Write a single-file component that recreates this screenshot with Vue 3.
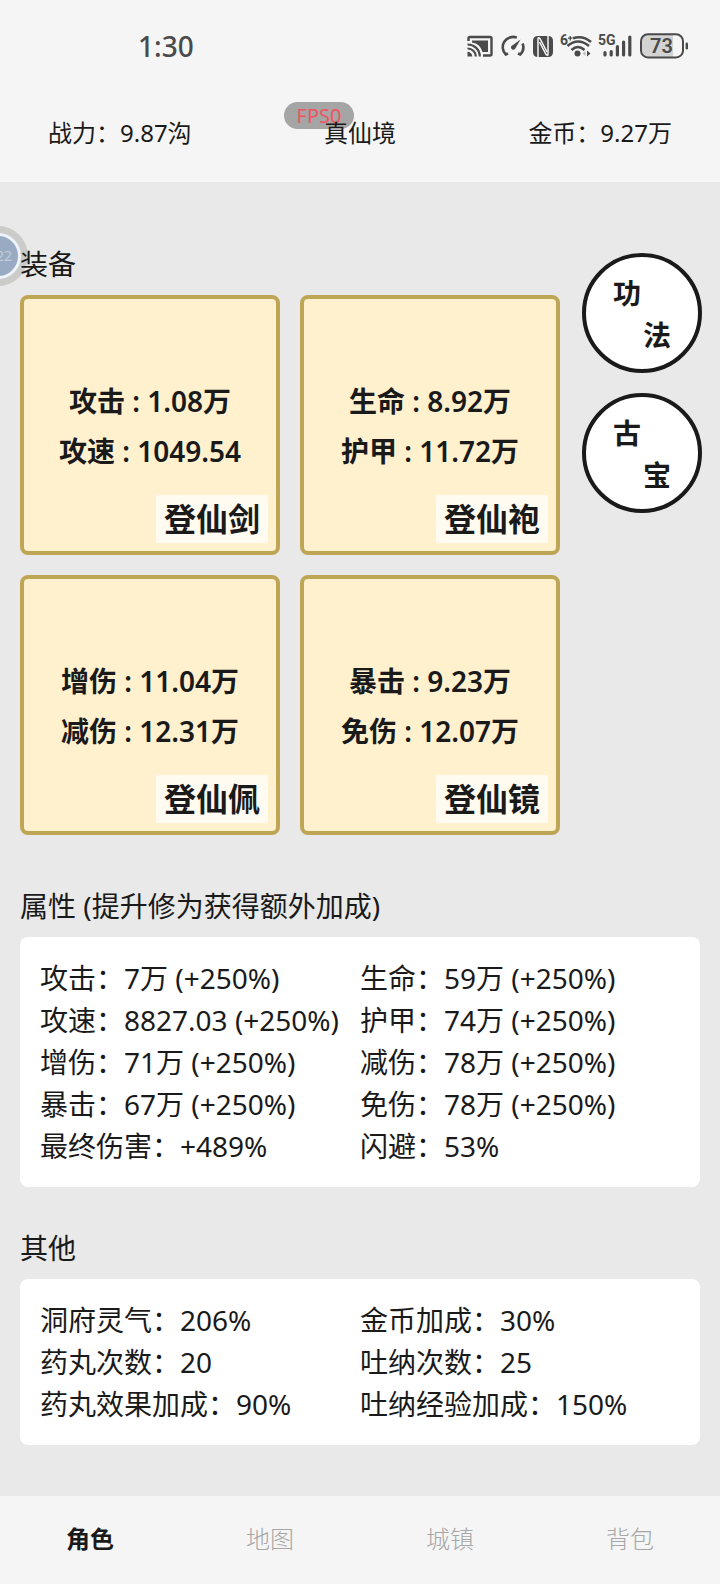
<script setup>
import { ref } from 'vue'

const equipment = [
  { name: '登仙剑', stats: ['攻击 : 1.08万', '攻速 : 1049.54'] },
  { name: '登仙袍', stats: ['生命 : 8.92万', '护甲 : 11.72万'] },
  { name: '登仙佩', stats: ['增伤 : 11.04万', '减伤 : 12.31万'] },
  { name: '登仙镜', stats: ['暴击 : 9.23万', '免伤 : 12.07万'] },
]

const shortcuts = [['功', '法'], ['古', '宝']]

const panels = [
  {
    title: '属性 (提升修为获得额外加成)',
    rows: [
      '攻击：7万 (+250%)', '生命：59万 (+250%)',
      '攻速：8827.03 (+250%)', '护甲：74万 (+250%)',
      '增伤：71万 (+250%)', '减伤：78万 (+250%)',
      '暴击：67万 (+250%)', '免伤：78万 (+250%)',
      '最终伤害：+489%', '闪避：53%',
    ],
  },
  {
    title: '其他',
    rows: [
      '洞府灵气：206%', '金币加成：30%',
      '药丸次数：20', '吐纳次数：25',
      '药丸效果加成：90%', '吐纳经验加成：150%',
    ],
  },
]

const tabs = ['角色', '地图', '城镇', '背包']
const activeTab = ref('角色')
</script>

<template>
  <div class="app">
    <div class="status">
      <span class="clock">1:30</span>
      <div class="status-icons">
        <svg width="26" height="26" viewBox="0 0 26 26" fill="none" stroke="#4a4a4a">
          <path d="M1.5 8V5.5Q1.5 4 3 4H23Q24.5 4 24.5 5.5V21Q24.5 22.5 23 22.5H16" stroke-width="2.4" />
          <path d="M5 7.5H21V19H15.5A13 13 0 0 0 5 9.5Z" fill="#4a4a4a" stroke="none" />
          <path d="M0.5 11.5A12 12 0 0 1 12.8 23.5M0.5 15.5A8 8 0 0 1 8.8 23.5" stroke-width="2.2" />
          <path d="M0.5 18.8A4.8 4.8 0 0 1 5.3 23.5H0.5Z" fill="#4a4a4a" stroke="none" />
        </svg>
        <svg width="24" height="26" viewBox="0 0 24 26" fill="none" stroke="#4a4a4a" stroke-width="2.6">
          <path d="M7 20.5L4.8 21.5A10.3 10.3 0 0 1 15.8 4.6M21.6 10.5A10.3 10.3 0 0 1 19.2 21.5L17 20.5" />
          <path d="M19.5 6.5L14 16A2.4 2.4 0 0 1 10.2 13.2Z" fill="#4a4a4a" stroke="none" />
        </svg>
        <svg width="20" height="26" viewBox="0 0 20 26">
          <path d="M5 3H15Q20 3 20 8V19Q20 24 15 24H5Q0 24 0 19V8Q0 3 5 3Z" fill="#4a4a4a" />
          <path d="M5 24V6Q5 3.6 7 5.6L14 19" fill="none" stroke="#f5f5f5" stroke-width="1.5" />
          <path d="M15 3V21Q15 23.4 13 21.4L6.5 9" fill="none" stroke="#f5f5f5" stroke-width="1.5" />
        </svg>
        <svg width="30" height="26" viewBox="0 0 30 26" fill="none" stroke="#4a4a4a" stroke-width="2.5">
          <text x="-1" y="12" class="tiny">6</text>
          <path d="M7 5.2H11.5M9.25 3V7.5" stroke-width="1.3" />
          <path d="M12 5.2Q22 2 30 9M6.5 13Q17 4 28 13M10.5 17Q17 11 23.5 17" />
          <circle cx="16.5" cy="20.5" r="3" fill="#4a4a4a" stroke="none" />
          <path d="M24.5 18V23L21.5 20.5Z" fill="#bdbdbd" stroke="none" />
          <path d="M26 17.5V23.5L29.5 20.5Z" fill="#4a4a4a" stroke="none" />
        </svg>
        <svg width="33" height="26" viewBox="0 0 33 26" fill="none" stroke="#4a4a4a" stroke-width="3.2" stroke-linecap="round">
          <text x="-1" y="12" class="tiny">5G</text>
          <path d="M6 19.5V22M12.2 18.5V22M18.4 13.5V22M24.6 9V22M30.8 4V22" />
        </svg>
        <svg width="48" height="26" viewBox="0 0 48 26">
          <path d="M9 2H33V24H9Q2 24 2 17V9Q2 2 9 2Z" fill="#d3d3d3" />
          <rect x="1" y="1.2" width="42" height="23.2" rx="7" fill="none" stroke="#4a4a4a" stroke-width="2" />
          <rect x="45.6" y="9.5" width="2.4" height="7" rx="1.2" fill="#4a4a4a" />
          <text x="21.5" y="20" text-anchor="middle" class="charge">73</text>
        </svg>
      </div>
    </div>

    <header class="summary">
      <span>战力：9.87沟</span>
      <span class="realm"><span class="fps">FPS0</span><span class="realm-name">真仙境</span></span>
      <span>金币：9.27万</span>
    </header>

    <main class="content">
      <div class="ball"><span class="ball-core">22</span></div>
      <section class="gear">
        <div class="gear-main">
          <h2>装备</h2>
          <div class="cards">
            <button v-for="item in equipment" :key="item.name" type="button" class="card">
              <span v-for="stat in item.stats" :key="stat" class="stat">{{ stat }}</span>
              <span class="badge">{{ item.name }}</span>
            </button>
          </div>
        </div>
        <div class="shortcuts">
          <button v-for="chars in shortcuts" :key="chars[0]" type="button" class="round">
            <span class="pair"><span>{{ chars[0] }}</span><span class="second">{{ chars[1] }}</span></span>
          </button>
        </div>
      </section>

      <section v-for="panel in panels" :key="panel.title" class="block">
        <h2>{{ panel.title }}</h2>
        <div class="panel">
          <span v-for="row in panel.rows" :key="row">{{ row }}</span>
        </div>
      </section>
    </main>

    <nav class="tabs">
      <button
        v-for="tab in tabs"
        :key="tab"
        type="button"
        class="tab"
        :class="{ active: tab === activeTab }"
        @click="activeTab = tab"
      >{{ tab }}</button>
    </nav>
  </div>
</template>

<style>
body {
  background: #e9e9e9;
}
</style>

<style scoped>
.app {
  display: flex;
  flex-direction: column;
  min-height: 100vh;
  background: #e9e9e9;
  color: #1a1a1a;
  font-family: "Noto Sans", "Noto Sans CJK SC", sans-serif;
  font-size: 28px;
}

button {
  margin: 0;
  padding: 0;
  color: inherit;
  font: inherit;
  cursor: pointer;
}

svg {
  overflow: visible;
}

.status {
  display: flex;
  align-items: center;
  justify-content: space-between;
  height: 92px;
  padding: 0 32px 0 138px;
  background: #f5f5f5;
}

.clock {
  color: #4a4a4a;
  font-weight: 500;
}

.status-icons {
  display: flex;
  gap: 8px;
}

.tiny {
  fill: #4a4a4a;
  stroke: none;
  font-family: Roboto, sans-serif;
  font-size: 14px;
  font-weight: 700;
}

.charge {
  fill: #4a4a4a;
  font-family: Roboto, sans-serif;
  font-size: 20px;
  font-weight: 600;
}

.summary {
  display: flex;
  align-items: center;
  justify-content: space-between;
  height: 78px;
  padding: 0 48px 12px;
  background: #f5f5f5;
  font-size: 24px;
}

.realm {
  position: relative;
}

.realm-name {
  position: relative;
}

.fps {
  position: absolute;
  left: -40px;
  bottom: 20px;
  width: 70px;
  border-radius: 14px;
  background: #a5a5a5;
  color: #ef5460;
  font-size: 20px;
  line-height: 27px;
  text-align: center;
}

.content {
  position: relative;
  flex: 1;
  padding: 62px 20px 50px;
  overflow: hidden;
}

.ball {
  position: absolute;
  top: 44px;
  left: -32px;
  display: flex;
  align-items: center;
  justify-content: center;
  width: 60px;
  height: 60px;
  border-radius: 50%;
  background: #cbcbca;
}

.ball-core {
  box-sizing: border-box;
  width: 46px;
  height: 46px;
  padding-right: 6px;
  border: 3px solid #eef4fa;
  border-radius: 50%;
  background: #98abc2;
  color: #c3ccd6;
  font-size: 14px;
  line-height: 40px;
  text-align: right;
}

h2 {
  position: relative;
  margin: 0 0 11px;
  font-size: 28px;
  font-weight: 400;
  line-height: 40px;
}

.gear {
  display: flex;
  gap: 22px;
  margin-right: -2px;
}

.gear-main {
  flex: 1;
  min-width: 0;
}

.cards {
  display: grid;
  grid-template-columns: repeat(2, minmax(0, 1fr));
  gap: 20px;
}

.card {
  position: relative;
  display: flex;
  flex-direction: column;
  align-items: center;
  justify-content: center;
  box-sizing: border-box;
  aspect-ratio: 1;
  padding-top: 2px;
  border: 4px solid #bfa657;
  border-radius: 8px;
  background: #fff0ce;
  font-weight: 600;
}

.stat {
  line-height: 50px;
}

.badge {
  position: absolute;
  right: 8px;
  bottom: 8px;
  padding: 0 8px;
  background: #fffbf1;
  font-size: 32px;
  font-weight: 700;
  line-height: 48px;
}

.shortcuts {
  display: flex;
  flex: none;
  flex-direction: column;
  gap: 20px;
  width: 120px;
  padding-top: 9px;
}

.round {
  display: flex;
  align-items: center;
  justify-content: center;
  box-sizing: border-box;
  width: 120px;
  height: 120px;
  padding-top: 2px;
  border: 4px solid #1a1a1a;
  border-radius: 50%;
  background: #fff;
  font-weight: 600;
}

.pair {
  display: flex;
  flex-direction: column;
  width: 58px;
  text-align: left;
  line-height: 42px;
}

.second {
  text-align: right;
}

.block {
  margin-top: 51px;
}

.block + .block {
  margin-top: 41px;
}

.panel {
  display: grid;
  grid-template-columns: 1fr 1fr;
  padding: 20px;
  border-radius: 8px;
  background: #fff;
  line-height: 42px;
  white-space: nowrap;
}

.tabs {
  display: grid;
  grid-template-columns: repeat(4, 1fr);
  height: 88px;
  background: #f5f5f5;
}

.tab {
  padding-bottom: 6px;
  border: 0;
  background: none;
  color: #a6a6a6;
  font-size: 24px;
  font-weight: 300;
}

.tab.active {
  color: #1a1a1a;
  font-weight: 700;
}
</style>
